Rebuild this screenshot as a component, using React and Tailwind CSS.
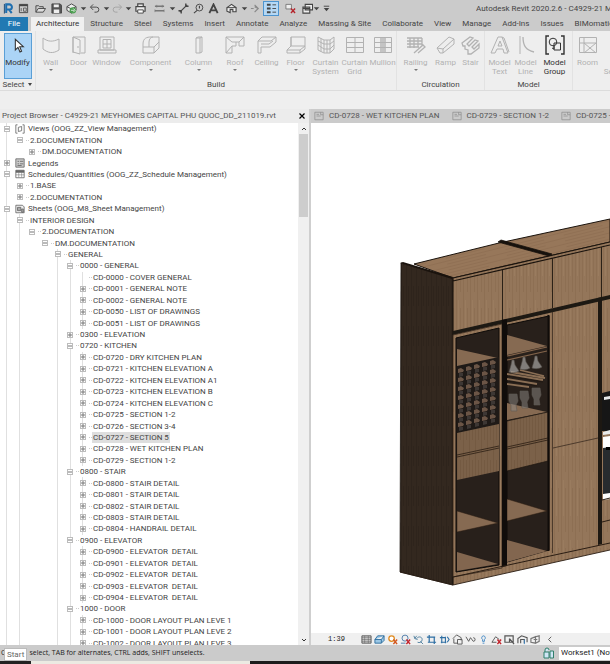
import React, { useState } from "react";
import clsx from "clsx";

const TABS = [
  "Architecture", "Structure", "Steel", "Systems", "Insert", "Annotate", "Analyze",
  "Massing & Site", "Collaborate", "View", "Manage", "Add-Ins", "Issues", "BIMomatic",
];

// [level, state, label, icon]   state: "-" open, "+" closed, "" leaf
const TREE = [
  [0, "-", "Views (OOG_ZZ_View Management)", "views"],
  [1, "-", "2.DOCUMENTATION"],
  [2, "+", "DM.DOCUMENTATION"],
  [0, "+", "Legends", "legends"],
  [0, "-", "Schedules/Quantities (OOG_ZZ_Schedule Management)", "schedule"],
  [1, "+", "1.BASE"],
  [1, "+", "2.DOCUMENTATION"],
  [0, "-", "Sheets (OOG_M8_Sheet Management)", "sheets"],
  [1, "-", "INTERIOR DESIGN"],
  [2, "-", "2.DOCUMENTATION"],
  [3, "-", "DM.DOCUMENTATION"],
  [4, "-", "GENERAL"],
  [5, "-", "0000 - GENERAL"],
  [6, "", "CD-0000 - COVER GENERAL"],
  [6, "+", "CD-0001 - GENERAL NOTE"],
  [6, "+", "CD-0002 - GENERAL NOTE"],
  [6, "+", "CD-0050 - LIST OF DRAWINGS"],
  [6, "+", "CD-0051 - LIST OF DRAWINGS"],
  [5, "+", "0300 - ELEVATION"],
  [5, "-", "0720 - KITCHEN"],
  [6, "+", "CD-0720 - DRY KITCHEN PLAN"],
  [6, "+", "CD-0721 - KITCHEN ELEVATION A"],
  [6, "+", "CD-0722 - KITCHEN ELEVATION A1"],
  [6, "+", "CD-0723 - KITCHEN ELEVATION B"],
  [6, "+", "CD-0724 - KITCHEN ELEVATION C"],
  [6, "+", "CD-0725 - SECTION 1-2"],
  [6, "+", "CD-0726 - SECTION 3-4"],
  [6, "+", "CD-0727 - SECTION 5"],
  [6, "+", "CD-0728 - WET KITCHEN PLAN"],
  [6, "+", "CD-0729 - SECTION 1-2"],
  [5, "-", "0800 - STAIR"],
  [6, "+", "CD-0800 - STAIR DETAIL"],
  [6, "+", "CD-0801 - STAIR DETAIL"],
  [6, "+", "CD-0802 - STAIR DETAIL"],
  [6, "+", "CD-0803 - STAIR DETAIL"],
  [6, "+", "CD-0804 - HANDRAIL DETAIL"],
  [5, "-", "0900 - ELEVATOR"],
  [6, "+", "CD-0900 - ELEVATOR\u00a0 DETAIL"],
  [6, "+", "CD-0901 - ELEVATOR\u00a0 DETAIL"],
  [6, "+", "CD-0902 - ELEVATOR\u00a0 DETAIL"],
  [6, "+", "CD-0903 - ELEVATOR\u00a0 DETAIL"],
  [6, "+", "CD-0904 - ELEVATOR\u00a0 DETAIL"],
  [5, "-", "1000 - DOOR"],
  [6, "+", "CD-1000 - DOOR LAYOUT PLAN LEVE 1"],
  [6, "+", "CD-1001 - DOOR LAYOUT PLAN LEVE 2"],
  [6, "+", "CD-1002 - DOOR LAYOUT PLAN LEVE 3"],
];

function Ico({ className = "size-3", box = 12, children }) {
  return (
    <svg viewBox={`0 0 ${box} ${box}`} className={clsx("shrink-0", className)} fill="none" stroke="currentColor" strokeWidth="1" aria-hidden="true">
      {children}
    </svg>
  );
}

/* ---------- quick access bar ---------- */

const ARROW = <path d="M3 4.500h6L6 8z" fill="currentColor" stroke="none" />;

const QUICK = [
  { n: "Revit", w: "w-4", c: "text-[#1f6fb0]", i: <><path d="M3.500 11V1.500H7a2.500 2.500 0 0 1 0 5.500H4M6.500 7l3 4" strokeWidth="2.200" /><path d="M1.500 1v10.500" stroke="#123f6b" /></> },
  { n: "Home", w: "w-3.5", i: <><path d="M1.500 1.500h9v9h-9z" /><path d="M1.500 2.500h9" strokeWidth="2" /><path d="M3.500 5.500v3.500M6 5.500h3v3.500H6z" strokeWidth=".8" /></> },
  { n: "Open", w: "w-5", i: <><path d="M1 10V3h3l1 1h4v2" /><path d="M1 10l2.500-4H11.500l-2.500 4z" fill="#ddd" /></> },
  { n: "Save", w: "w-3", i: <><path d="M1 1h9l1.500 1.500V11H1z" fill="#555" /><path d="M3 1.500h5.500V4.500H3zM3 7h6v4H3z" fill="#eee" stroke="none" /></> },
  { n: "Synchronize", w: "w-[18px]", i: <><path d="M1 4l5-3 5 3v4l-5 3-5-3z" fill="#eee" /><path d="M1 4l5 2.500L11 4" /><circle cx="7.500" cy="8" r="3.500" fill="#4a9e4f" stroke="none" /><path d="M5.500 8h3.500M8 6L10 8 8 10" stroke="#fff" strokeWidth=".8" /></> },
  { n: "Sync options", w: "w-1.5", i: ARROW },
  { n: "Undo", w: "w-[17px]", i: <path d="M4.500 1.500L1.500 4.500l3 3M2 4.500h6a2.700 2.700 0 0 1 0 5.500H6" /> },
  { n: "Undo list", w: "w-1.5", i: ARROW },
  { n: "Redo", w: "w-4", c: "text-[#a2a2a2]", i: <path d="M7.500 1.500l3 3-3 3M10 4.500H4a2.700 2.700 0 0 0 0 5.500h2" /> },
  { n: "Redo list", w: "w-1.5", i: ARROW },
  { n: "Print", w: "w-[18px]", i: <><path d="M3 4V1h6v3M1 4h10v5H1z" fill="#eee" strokeWidth="1.300" /><path d="M3 7.500h6V11H3z" fill="#fff" /></> },
  { n: "Measure", w: "w-5", c: "text-[#777]", i: <><path d="M1 3.500h10M1 8.500h10" strokeWidth="1.500" /><path d="M3 2v3M9 2v3M1 7v3M11 7v3" strokeWidth=".7" /></> },
  { n: "Measure options", w: "w-1.5", i: ARROW },
  { n: "Aligned dimension", w: "w-4", i: <><path d="M2 10l8-8" strokeWidth="1.300" /><path d="M.5 8.500h3v3M8.500 .5v3h3" strokeWidth="1.500" /></> },
  { n: "Tag", w: "w-3.5", i: <><circle cx="7" cy="5" r="3.700" /><path d="M7 3v3M1 11l3.500-3" strokeWidth="1.200" /></> },
  { n: "Text", w: "w-4", i: <path d="M1.500 11L6 1.500 10.500 11M3 8h6" strokeWidth="2" /> },
  { n: "3D view", w: "w-5", i: <><path d="M1 5l5-3.500L11 5v4.500H7.500V7h-3v3.500L1 9z" fill="#eee" strokeWidth="1.200" /><path d="M1 5h10" /></> },
  { n: "3D options", w: "w-1.5", i: ARROW },
  { n: "Section", w: "w-4", c: "text-[#8a8a8a]", i: <path d="M1 6h3M5 2l4 4-4 4M5 4L9 6" strokeWidth="1.300" /> },
  { n: "Thin lines", w: "w-4", on: true, i: <><path d="M1 2h4M1 6h4M1 10h4" strokeWidth="2.200" /><path d="M7 2h4M7 6h4M7 10h4" /></> },
  { n: "Close inactive", w: "w-[22px]", i: <><path d="M1 1.500h6v5H1z" fill="#eee" stroke="#777" /><path d="M6.500 6l4.500 5M11 6l-4.500 5" stroke="#b5232b" strokeWidth="1.500" /></> },
  { n: "Switch windows", w: "w-3", i: <path d="M3.500 1.500h8v6h-8zM1 4.500h7.500V11H1zM1 6h7.500" fill="#eee" strokeWidth="1.200" /> },
  { n: "Window list", w: "w-1.5", i: ARROW },
  { n: "Customize", w: "w-3.5", i: <><path d="M3 3.500h6" /><path d="M3 5.500h6L6 9z" fill="currentColor" stroke="none" /></> },
];

function QuickBar() {
  return (
    <header className="flex h-[17px] shrink-0 items-center bg-[#cbcbcb] text-[#444]">
      {QUICK.map((q) => (
        <button
          key={q.n}
          aria-label={q.n}
          className={clsx("flex h-[15px] shrink-0 items-center justify-center", q.w, q.c, q.on && "border border-[#4d94cf] bg-[#b5d8f5]")}
        >
          <Ico className="size-[11px]">{q.i}</Ico>
        </button>
      ))}
      <h1 className="ml-auto w-[134px] shrink-0 overflow-hidden text-[8px] leading-3 whitespace-nowrap">
        Autodesk Revit 2020.2.6 - C4929-21 MEYHOMES
      </h1>
    </header>
  );
}

/* ---------- ribbon ---------- */

const GROUPS = [
  {
    name: "Build", w: "w-[361px]", tools: [
      { n: "Wall", w: "w-[30px]", more: true, i: <path d="M2 3c5 4 10 4 16 1v11c-6 4-11 3-16-1z" /> },
      { n: "Door", w: "w-[26px]", i: <path d="M4 18V2h12v16h-4M4 2l7 3v14l-7-2zM9 11v2" /> },
      { n: "Window", w: "w-[30px]", i: <><path d="M3 2h14v13H3zM1 18h18v-3H1z" /><path d="M6 4.500h8v8.500H6zM10 4.500V13M6 9h8" /></> },
      { n: "Component", w: "w-[58px]", more: true, i: <path d="M2 9c0-6 4-7 8-7h8v11l-5 5H2zM2 12h11v6M13 12l5-5M8 12V7c0-3 2-5 4-5" /> },
      { n: "Column", w: "w-[38px]", more: true, i: <path d="M7 3l2-1h4v15l-2 1H7zM7 3h4v15M11 3l2-1" /> },
      { n: "Roof", w: "w-[35px]", more: true, i: <path d="M1 2h18v9h-5V7h-3v4H7v7H1zM1 18L7 11M1 2l6 5h4M19 2l-5 5" /> },
      { n: "Ceiling", w: "w-[28px]", i: <path d="M1 6l4-4h14v5L13 12H4v6H1zM1 6h13l5-4M4 9h8l4-3" /> },
      { n: "Floor", w: "w-[30px]", more: true, i: <path d="M5 2h14v9l-5 4H1l4-4zM5 2v9h14M1 15v3h13v-3M14 18l5-4v-3" /> },
      { n: "Curtain System", w: "w-[30px]", i: <path d="M2 2l6 3h6l4-3v12l-4 4H8l-6-3zM8 5v13M14 5v13M2 6l6 3h6l4-3M2 10l6 4h6l4-4M5 3.500v13M11 5v13" /> },
      { n: "Curtain Grid", w: "w-[28px]", i: <path d="M1.500 2.500h17v15h-17zM10 2v16M1.500 7.500h17M1.500 12.500h17" /> },
      { n: "Mullion", w: "w-[28px]", i: <><path d="M1.500 2.500h17v15h-17zM1.500 7.500h17M1.500 12.500h17" /><path d="M8 2v16M12 2v16M10 2v16" strokeWidth="1.400" /></> },
    ],
  },
  {
    name: "Circulation", w: "w-[88px]", tools: [
      { n: "Railing", w: "w-[34px]", more: true, i: <path d="M1 3h15M1 6h15M1 9h15M1 12h12M4 3v10M8 3v10M12 3v9M16 3v8M8 18l9-8 2 2-7 6" strokeWidth="1.300" /> },
      { n: "Ramp", w: "w-[26px]", i: <path d="M1 13L13 2l5 2v5L7 18H4zM1 13l6 1 11-10M7 14v4" /> },
      { n: "Stair", w: "w-[24px]", i: <path d="M1 8l8-6 3 1-6 6 2 2 6-6 3 1-6 6 2 2 5-5v4l-8 6h-3v-4l-3-1V11H2z" strokeWidth="1.300" /> },
    ],
  },
  {
    name: "Model", w: "w-[88px]", tools: [
      { n: "Model Text", w: "w-[28px]", i: <path d="M1 18L8 2h4l6 16h-4l-1-4H7l-2 4zM8 11h4L10 6zM12 2l2 1 5 14" /> },
      { n: "Model Line", w: "w-[24px]", i: <><path d="M4 1v18" /><path d="M7 2c0 9 3 13 11 15" strokeWidth="1.300" /></> },
      { n: "Model Group", w: "w-[34px]", on: true, i: <><path d="M4 1H1v18h3M16 1h3v18h-3" strokeWidth="1.400" /><circle cx="8" cy="7" r="3.800" /><path d="M9 8h6.500v7H9zM9 11v3l-2-1" /></> },
    ],
  },
  {
    name: "", w: "w-[68px]", tools: [
      { n: "Room", w: "w-[29px]", i: <path d="M1.500 2.500h17v15h-17zM6 2v6H1.500M6 8v10M6 8h12M6 18L18 8M6 8l12 10" /> },
      { n: "Room Separator", w: "w-[38px]", i: <path d="M-4 2.500h22v15H-4zM8 2v16" /> },
    ],
  },
];

function Tool({ t }) {
  return (
    <button className={clsx("flex shrink-0 flex-col items-center", t.w, t.on ? "text-[#333]" : "text-[#b2b2b2]")}>
      <Ico box={20} className="size-5">{t.i}</Ico>
      <span className="mt-[3px] flex flex-col items-center leading-[9px] whitespace-nowrap">
        {t.n.split(" ").map((line) => <span key={line}>{line}</span>)}
      </span>
      {t.more && <span className="mt-[2px] border-x-2 border-t-2 border-x-transparent border-t-[#777]" />}
    </button>
  );
}

function Ribbon() {
  const [tab, setTab] = useState("Architecture");
  return (
    <>
      <nav className="flex h-[14px] shrink-0 gap-px overflow-hidden bg-[#cbcbcb] text-[8px] whitespace-nowrap">
        <button className="mr-[2px] w-7 shrink-0 bg-[#2179b3] text-white">File</button>
        {TABS.map((t) => (
          <button
            key={t}
            onClick={() => setTab(t)}
            className={clsx("shrink-0 px-[5px]", tab === t ? "bg-[#f0f0f0]" : "text-[#444]")}
          >
            {t}
          </button>
        ))}
      </nav>
      <div className="flex h-[60px] shrink-0 overflow-hidden border-b border-[#dcdcdc] bg-[#eeeeee] text-[8px] text-[#444]">
        <div className="flex w-9 shrink-0 flex-col items-center border-r border-[#e2e2e2] pt-[2px]">
          <button className="flex h-[46px] w-7 flex-col items-center border border-[#5a9fd6] bg-[#abd4f6] pt-1 text-[#333]">
            <Ico className="size-4"><path d="M4 1v8l2-2 1.500 3.500 1.200-.6L7.300 6.500H10z" fill="#fff" strokeWidth=".8" /></Ico>
            <span className="mt-[3px] leading-3">Modify</span>
          </button>
          <button className="flex items-center gap-1 leading-[11px]">
            Select <span className="border-x-2 border-t-[3px] border-x-transparent border-t-[#444]" />
          </button>
        </div>
        {GROUPS.map((g) => (
          <section key={g.name} className={clsx("flex shrink-0 flex-col justify-between border-r border-[#e2e2e2] pt-1", g.w)}>
            <div className="flex justify-center">
              {g.tools.map((t) => <Tool key={t.n} t={t} />)}
            </div>
            <h2 className="text-center leading-[11px]">{g.name}</h2>
          </section>
        ))}
      </div>
    </>
  );
}

/* ---------- project browser ---------- */

const NODE_ICONS = {
  views: <><path d="M3 1H1v10h2M9 1h2v10H9" /><path d="M4 4l4-1v5l-4 1z" /></>,
  legends: <><path d="M1 1h10v10H1z" fill="#ccc" /><path d="M3 4h2M3 7h2M6 4h4M6 7h4M3 9h5" /></>,
  schedule: <><path d="M1 1.500h10v9H1z" fill="#fff" /><path d="M1 3h10" strokeWidth="3" /><path d="M1 7h10M4.500 4v6M8 4v6" strokeWidth=".6" /></>,
  sheets: <><path d="M1 1.500h8l2 2v7H1z" fill="#eee" /><path d="M3 4h4v4H3zM8 6h2v4H8z" fill="#aaa" /></>,
};

// column widths repeat 13, 13, 12
const colWidth = (level) => (level % 3 === 2 ? "w-3" : "w-[13px]");

function TreeRow({ row, index, selected, onSelect }) {
  const [level, state, label, icon] = row;
  const runsOn = (l) => l === 0 || l > 3 || (l === 1 && index > 7);
  return (
    <li role="treeitem" aria-selected={selected} className="flex min-h-0 items-stretch whitespace-nowrap">
      {Array.from({ length: level }, (_, l) => (
        <span key={l} className={clsx("flex shrink-0 justify-center", colWidth(l))}>
          {runsOn(l) && <span className="border-l border-[#e0e0e0]" />}
        </span>
      ))}
      <span className={clsx("grid shrink-0 place-items-center", colWidth(level))}>
        {runsOn(level) && <span className="h-full border-l border-[#e0e0e0] [grid-area:1/1]" />}
        {state && (
          <button
            aria-label={state === "+" ? "Expand" : "Collapse"}
            className="flex size-[6px] items-center justify-center border border-[#bcbcbc] bg-white [grid-area:1/1]"
          >
            <Ico box={4} className="size-1 text-[#777]"><path d={state === "+" ? "M0 2h4M2 0v4" : "M0 2h4"} /></Ico>
          </button>
        )}
      </span>
      {icon
        ? <Ico className="mx-[2px] size-[10px] self-center text-[#666]">{NODE_ICONS[icon]}</Ico>
        : <span className="w-[3px] shrink-0 self-center border-t border-dotted border-[#ccc]" />}
      <button onClick={onSelect} className={clsx("px-px leading-[11px]", selected && "bg-[#dedede]")}>{label}</button>
    </li>
  );
}

function ProjectBrowser() {
  const [selected, setSelected] = useState(27);
  return (
    <aside className="flex w-[51%] shrink-0 flex-col border-r-2 border-[#cfcfcf] bg-white">
      <div className="flex h-[14px] shrink-0 items-center justify-between bg-[#ececec] px-[2px] text-[#555]">
        <h2 className="leading-3 whitespace-nowrap">Project Browser - C4929-21 MEYHOMES CAPITAL PHU QUOC_DD_211019.rvt</h2>
        <button aria-label="Close browser" className="mr-px">
          <Ico className="size-2 text-black" box={8}><path d="M1.500 1.500l5 5M6.500 1.500l-5 5" strokeWidth="1.200" /></Ico>
        </button>
      </div>
      <div className="flex min-h-0 flex-1">
        <div className="flex min-w-0 flex-1 flex-col overflow-hidden">
          <ul role="tree" className="-mb-1 grid min-h-0 flex-1 auto-rows-fr text-[#444]">
            {TREE.map((row, i) => (
              <TreeRow key={i} row={row} index={i} selected={i === selected} onSelect={() => setSelected(i)} />
            ))}
          </ul>
        </div>
        <div className="flex w-[11px] shrink-0 flex-col items-center bg-[#f0f0f0]">
          <button aria-label="Scroll up" className="flex h-[11px] items-center"><Ico className="size-2" box={8}><path d="M2 5l2-2 2 2" /></Ico></button>
          <span className="h-[83px] w-[9px] bg-[#cdcdcd]" />
          <button aria-label="Scroll down" className="mt-auto flex h-[11px] items-center"><Ico className="size-2" box={8}><path d="M2 3l2 2 2-2" /></Ico></button>
        </div>
      </div>
    </aside>
  );
}

/* ---------- 3D view ---------- */

const RACK_ROWS = [0, 1, 2, 3, 4, 5, 6];
const RACK_COLS = [0, 1, 2, 3, 4];

function Glass({ x, y, flip }) {
  return flip
    ? <path d={`M${x - 4} ${y}h8l1 7-2 4 1 6h-6v-6l-2-4z`} fill="#8d8a86" fillOpacity=".5" stroke="#5f5a55" strokeWidth=".6" />
    : <path d={`M${x - 1} ${y}h2l1 5 4 6c-3 2-7 2-10 1l2-7z`} fill="#a7a5a3" fillOpacity=".7" stroke="#55504b" strokeWidth=".6" />;
}

function Cabinet() {
  return (
    <svg viewBox="311 123 299 510" preserveAspectRatio="xMinYMin slice" className="block h-full w-full" role="img" aria-label="Kitchen cabinet in 3D">
      <defs>
        <pattern id="grain" width="7" height="60" patternUnits="userSpaceOnUse">
          <rect width="7" height="60" fill="#94765a" />
          <path d="M1.500 0v60M5.500 8v44" stroke="#896c50" strokeWidth=".7" />
          <path d="M3.500 0v36" stroke="#9c7e61" strokeWidth=".8" />
        </pattern>
        <pattern id="grainDim" width="6" height="50" patternUnits="userSpaceOnUse">
          <rect width="6" height="50" fill="#7b6149" />
          <path d="M1.500 0v50M4.500 10v30" stroke="#71573f" strokeWidth=".7" />
        </pattern>
        <pattern id="grainTop" width="60" height="6" patternUnits="userSpaceOnUse" patternTransform="rotate(-14)">
          <rect width="60" height="6" fill="#97775a" />
          <path d="M0 1.500h60M10 4.500h40" stroke="#8b6c50" strokeWidth=".6" />
        </pattern>
        <pattern id="grainDark" width="5" height="40" patternUnits="userSpaceOnUse">
          <rect width="5" height="40" fill="#33281f" />
          <path d="M1.500 0v40M3.500 6v20" stroke="#2d231b" strokeWidth=".7" />
        </pattern>
      </defs>

      {/* carcass */}
      <path d="M401 263l52 15v307l-53-13z" fill="url(#grainDark)" stroke="#1d1611" strokeWidth=".8" />
      <path d="M414 264l85-21 111-24v23l-157 36z" fill="url(#grainTop)" stroke="#1a130d" />
      <path d="M453 278l157-36v308l-157 35z" fill="url(#grain)" />
      <path d="M453 278l157-36M453 281l157-36M453 278v307" stroke="#1a130d" strokeWidth="1.100" fill="none" />
      <path d="M400 263l3-1 50 15-1 2z" fill="#1a130d" />
      <path d="M498 242l3-2 51 14-3 2z" fill="#17120d" stroke="#17120d" strokeWidth=".8" />

      {/* upper doors */}
      <path d="M502.500 270v50M552.500 258v50M601.500 247v50" stroke="#1f1710" strokeWidth=".9" />
      <path d="M453 331l157-36v4l-157 36z" fill="#1d1913" />

      {/* left glass door */}
      <path d="M453 335l49-11v244l-49 9z" fill="url(#grain)" stroke="#3a2b1f" strokeWidth=".8" />
      <path d="M456 338l43-10v237l-43 7z" fill="#28201b" stroke="#0e0b09" />
      <path d="M457 349l41 9-41 9z" fill="#866a52" />
      <path d="M457 366l42-9v67l-42 9z" fill="#1f1a17" />
      {RACK_ROWS.map((r) => RACK_COLS.map((c) => (
        <g key={`${r}-${c}`}>
          <path d={`M${458 + c * 8} ${369 + r * 9 - c * 2}l3-1 3 2-1 2-5 1z`} fill="#6b5546" />
          <path d={`M${459 + c * 8} ${373 + r * 9 - c * 2}h4v3l-4 1z`} fill="#3d3734" />
        </g>
      )))}
      <path d="M457 433l42-9v47l-42 9z" fill="url(#grainDim)" />
      <path d="M457 457l42-9M457 455l42-9" stroke="#2a1d13" strokeWidth=".8" />
      <path d="M457 511l41 12-41 9z" fill="#866a52" stroke="#2a1d13" strokeWidth=".5" />
      <path d="M457 552l41 12-41 7z" fill="#82664f" />

      {/* right glass door */}
      <path d="M507 323l45-10v242l-45 10z" fill="url(#grain)" />
      <path d="M507 325l42-9v234l-42 12z" fill="#28201b" stroke="#0e0b09" />
      <path d="M507 335l40 11-40 9z" fill="#866a52" />
      <path d="M507 356l40-9M507 360l40-9" stroke="#82634a" strokeWidth="1.200" />
      <path d="M507 374l36 6M511 372l34 6M507 379l30 5M520 370l24 6M507 384l22 3" stroke="#8a6e54" strokeWidth="1.800" />
      <path d="M507 376l36 6M507 381l30 5" stroke="#1d1510" strokeWidth=".7" />
      <Glass x={513} y={360} />
      <Glass x={524} y={357} />
      <Glass x={536} y={356} />
      <path d="M507 403l40 9-40 8z" fill="#866a52" />
      <Glass flip x={513} y={394} />
      <Glass flip x={524} y={391} />
      <Glass flip x={536} y={388} />
      <path d="M507 421l41-9v49l-41 10z" fill="url(#grainDim)" stroke="#1d1510" strokeWidth=".7" />
      <path d="M507 447l41-9M507 449l41-9" stroke="#2a1d13" strokeWidth=".8" />
      <path d="M507 499l40 12-40 10z" fill="#866a52" stroke="#2a1d13" strokeWidth=".5" />
      <path d="M507 540l40 11-40 11z" fill="#82664f" />
      <path d="M548.500 315v236" stroke="#100c0a" strokeWidth="2" />
      <path d="M502 320l5-1v247l-5 1z" fill="#100c0a" />

      {/* tall door */}
      <path d="M552.500 312v241M553 448l45-10" stroke="#3a2b1f" strokeWidth=".8" />
      <path d="M598 298l4-1v247l-4 1z" fill="#1d1812" />

      {/* ovens */}
      <path d="M602 393l8-2v40h-8z" fill="#161616" />
      <path d="M604 397l6-1v3l-6 1zM603 432l7-2v4l-7 1z" fill="#e8eaea" />
      <path d="M603 437l7-1v13h-7z" fill="#fff" />
      <path d="M603 448l7-1v47h-7z" fill="#272b2e" />
      <path d="M606 447h4v3h-4z" fill="#000" />
      <path d="M603 494l7-1v6l-7 1z" fill="#fff" />
      <path d="M602 522l8-2M602 500l8-2" stroke="#2a1d13" />

      {/* plinth */}
      <path d="M453 577l157-34" stroke="#2a1d13" strokeWidth="1" />
      <path d="M400 572l53 13 157-35" fill="none" stroke="#2a1d13" strokeWidth=".9" />
    </svg>
  );
}

const SHEET = <path d="M1 1.500h10v9H1zM8 1.500v3h3M3 4h3M3 6h5" strokeWidth=".8" />;
const RED_X = <path d="M7 6l4 5M11 6l-4 5" stroke="#c3262e" strokeWidth="1.600" />;

const VIEW_CONTROLS = [
  { n: "Detail level", i: <><path d="M1 2h10v8H1z" fill="#ccc" /><path d="M1 4h10M1 6h10M1 8h10M4 2v8M8 2v8" strokeWidth=".5" /></> },
  { n: "Visual style", c: "text-[#2f6f9f]", i: <path d="M1 6l3-4h7v5l-3 3H1zM1 6h7l3-4M8 6v4" fill="#9cc8e6" /> },
  { n: "Sun path", c: "text-[#e08a1e]", i: <><circle cx="5" cy="5" r="3" fill="#fff" strokeWidth="1.400" /><path d="M7 6l4 5M11 6l-4 5" stroke="#d2571f" strokeWidth="1.600" /></> },
  { n: "Shadows", c: "text-[#4a79a8]", i: <><circle cx="5.500" cy="4.500" r="3.300" /><path d="M1 10h5" />{RED_X}</> },
  { n: "Rendering", c: "text-[#4f7f9f]", i: <><path d="M1 2l1 3M4 2L2 5l3 1" /><path d="M4 5c2-3 6-2 6 1s-3 4-5 3M8 8l3 3" /></> },
  { n: "Crop view", c: "text-[#2d6ea3]", i: <path d="M3.500 1v8M1 3.500h9M9 3v8M2 9h9" strokeWidth="1.300" /> },
  { n: "Crop region", c: "text-[#2d6ea3]", i: <path d="M3 2v8M1 4h6M7 3v7M2 9h6M9 3l2 3-2 3" strokeWidth="1.200" /> },
  { n: "Lock 3D view", i: <path d="M1 5l4-4 5 3v3M2 5v5h4M6 6h5v5H6z" /> },
  { n: "Hide", i: <path d="M1 3l3 5 2-4 3 4a1.500 1.500 0 1 0 0-4" /> },
  { n: "Reveal", c: "text-[#3d86c4]", i: <path d="M6 2a2.200 2.200 0 0 1 1 4v2H5V6a2.200 2.200 0 0 1 1-4zM5 10h2" /> },
  { n: "Worksharing", i: <><path d="M1 9l4-6 4 3M1 9h5" />{RED_X}</> },
  { n: "Temporary", i: <path d="M1 2h9v7H1zM6 5l5 6M6 5v4" strokeWidth="1.300" /> },
  { n: "Analytical", i: <><path d="M1 10V5l4-3 6 2v5M4 10V6h4v4" strokeWidth="1.200" /><path d="M8 6v5" stroke="#3d86c4" /></> },
  { n: "Displacement", c: "text-[#777]", i: <path d="M1 5l5-2v7l-5-1zM6 3l4-1v6l-4 2M4 6h4" strokeWidth="1.300" /> },
];

function Viewport() {
  return (
    <main className="flex min-w-0 flex-1 flex-col bg-white">
      <div className="flex h-[14px] shrink-0 items-center gap-3 overflow-hidden bg-[#cbcbcb] px-[3px] text-[#555] whitespace-nowrap">
        {["CD-0728 - WET KITCHEN PLAN", "CD-0729 - SECTION 1-2", "CD-0725 - SECTION 1-2"].map((t) => (
          <button key={t} className="flex shrink-0 items-center gap-[5px] leading-3">
            <Ico className="size-[10px] text-[#888]">{SHEET}</Ico>
            {t}
          </button>
        ))}
      </div>
      <div className="min-h-0 flex-1 overflow-hidden"><Cabinet /></div>
      <div className="flex h-3 shrink-0 items-center bg-[#f0f0f0] pl-[17px] text-[#555]">
        <button className="w-[33px] shrink-0 text-left font-['Liberation_Mono',monospace] text-[7px] text-[#222]">1:39</button>
        <div className="flex gap-[2px]">
          {VIEW_CONTROLS.map((v) => (
            <button key={v.n} aria-label={v.n} className={clsx("flex", v.c)}><Ico className="size-[11px]">{v.i}</Ico></button>
          ))}
          <button aria-label="Less" className="flex"><Ico className="size-[11px]"><path d="M9 3L6 6l3 3" /></Ico></button>
        </div>
      </div>
    </main>
  );
}

export default function App() {
  return (
    <div className="flex h-screen flex-col overflow-hidden bg-[#efefef] font-['Roboto','Noto_Sans',sans-serif] text-[8px] text-[#333]">
      <QuickBar />
      <Ribbon />
      <div className="mt-[18px] flex min-h-0 flex-1">
        <ProjectBrowser />
        <Viewport />
      </div>

      <footer className="relative flex h-4 shrink-0 items-center bg-[#cbcbcb] pl-px text-[#222] whitespace-nowrap">
        <p className="flex gap-6 font-['Open_Sans','Noto_Sans',sans-serif] text-[7px]">
          <span>C</span>
          <span>select, TAB for alternates, CTRL adds, SHIFT unselects.</span>
        </p>
        <span role="tooltip" className="absolute top-[3px] left-1 border border-[#bbb] bg-white px-[2px] leading-[11px] text-[#666]">Start</span>
        <label className="ml-auto flex items-center gap-1">
          <Ico className="size-3 text-[#2f7f6a]"><path d="M1 5h5v6H1zM2 5V3a2 2 0 0 1 4 0M7 4h3.500v7H7z" fill="#cfe6f5" /></Ico>
          <select aria-label="Active workset" className="h-[13px] w-[51px] appearance-none overflow-hidden bg-white pl-[2px] leading-3">
            <option>Workset1 (Not Editable)</option>
          </select>
        </label>
      </footer>
      <div className="flex h-[3px] shrink-0">
        <span className="w-[5%] bg-[#222]" />
        <span className="w-[36%] bg-[#eceae2]" />
        <span className="flex-1 bg-[#1c1c1c]" />
      </div>
    </div>
  );
}
